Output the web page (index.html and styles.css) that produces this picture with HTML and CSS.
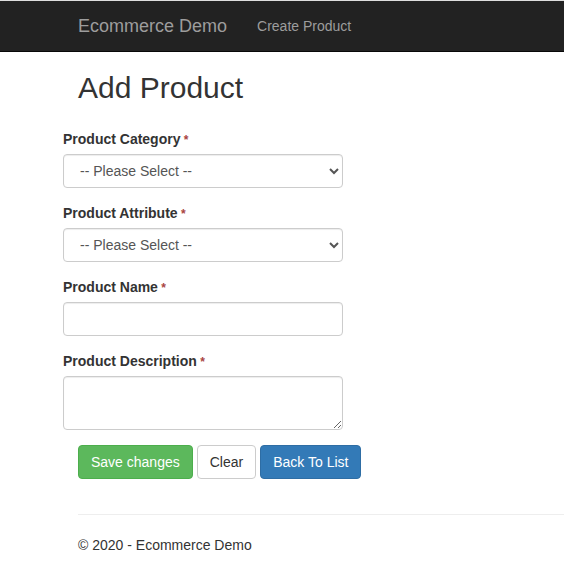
FILE: index.html
```html
<!DOCTYPE html>
<html lang="en">
<head>
<meta charset="utf-8">
<title>Add Product - Ecommerce Demo</title>
<link rel="stylesheet" href="styles.css">
</head>
<body>
<div class="topline"></div>
<nav class="navbar">
  <a class="brand" href="#">Ecommerce Demo</a>
  <a class="nav-link" href="#">Create Product</a>
</nav>
<div class="container">
  <h2 class="title">Add Product</h2>
  <form class="form">
    <div class="form-group">
      <label class="label required">Product Category</label>
      <select class="control">
        <option>-- Please Select --</option>
      </select>
    </div>
    <div class="form-group">
      <label class="label required">Product Attribute</label>
      <select class="control">
        <option>-- Please Select --</option>
      </select>
    </div>
    <div class="form-group">
      <label class="label required">Product Name</label>
      <input class="control" type="text">
    </div>
    <div class="form-group">
      <label class="label required">Product Description</label>
      <textarea class="control area"></textarea>
    </div>
    <div class="actions">
      <button type="button" class="btn btn-success">Save changes</button>
      <button type="button" class="btn btn-default">Clear</button>
      <button type="button" class="btn btn-primary">Back To List</button>
    </div>
  </form>
  <hr class="rule">
  <footer class="footer">© 2020 - Ecommerce Demo</footer>
</div>
</body>
</html>
```

FILE: styles.css
```css
* { box-sizing: border-box; }
html, body { margin: 0; padding: 0; }
body {
  font-family: "Liberation Sans", Arial, Helvetica, sans-serif;
  font-size: 14px;
  line-height: 20px;
  color: #333;
  background: #fff;
}
.topline { height: 1px; background: #dedede; }
.navbar {
  height: 51px;
  background: #222;
  border-bottom: 1px solid #080808;
  display: flex;
  align-items: flex-start;
  padding-left: 63px;
}
.brand {
  display: block;
  padding: 15px;
  font-size: 18px;
  line-height: 20px;
  height: 50px;
  color: #9d9d9d;
  text-decoration: none;
}
.nav-link {
  display: block;
  padding: 15px;
  line-height: 20px;
  color: #9d9d9d;
  text-decoration: none;
}
.container {
  padding-left: 78px;
  padding-right: 0;
}
.title {
  margin: 19px 0 10px;
  font-size: 30px;
  line-height: 33px;
  font-weight: 500;
  color: #333;
}
.form { padding-top: 15px; }
.form-group {
  margin-left: -15px;
  margin-bottom: 15px;
}
.label {
  display: block;
  height: 20px;
  font-weight: bold;
  margin-bottom: 5px;
  line-height: 20px;
}
.required::after {
  content: " *";
  color: #a94442;
  font-size: 12px;
  line-height: 0;
}
.control {
  display: block;
  width: 100%;
  max-width: 280px;
  height: 34px;
  padding: 6px 12px;
  font-family: inherit;
  font-size: 14px;
  line-height: 20px;
  color: #555;
  background: #fff;
  border: 1px solid #ccc;
  border-radius: 4px;
  box-shadow: inset 0 1px 1px rgba(0,0,0,.075);
  margin: 0;
}
.area { height: 54px; resize: both; }
.actions {
  display: flex;
  gap: 4px;
}
.btn {
  display: inline-block;
  height: 34px;
  padding: 6px 12px;
  font-family: inherit;
  font-size: 14px;
  line-height: 20px;
  border: 1px solid transparent;
  border-radius: 4px;
  margin: 0;
  cursor: pointer;
}
.btn-success { background: #5cb85c; border-color: #4cae4c; color: #fff; }
.btn-default { background: #fff; border-color: #ccc; color: #333; }
.btn-primary { background: #337ab7; border-color: #2e6da4; color: #fff; }
.rule {
  margin: 35px 0 20px;
  border: 0;
  border-top: 1px solid #eee;
}
.footer { line-height: 20px; }
```
